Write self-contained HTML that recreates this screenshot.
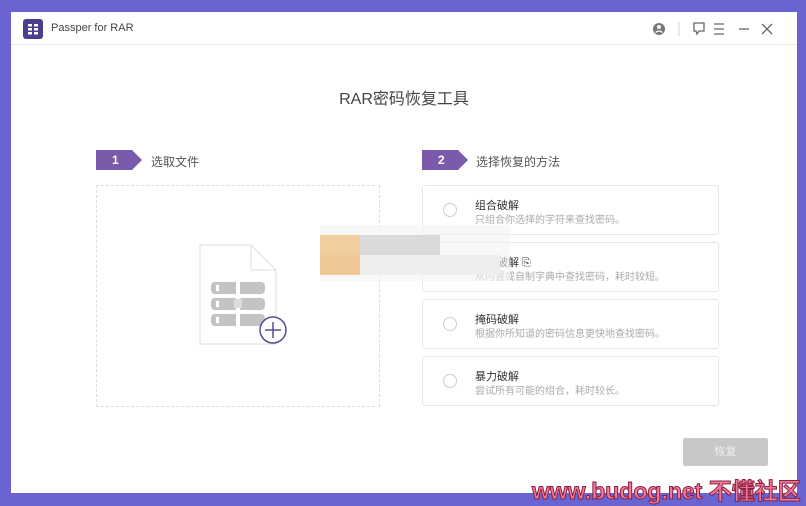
<!DOCTYPE html>
<html><head><meta charset="utf-8"><style>
*{margin:0;padding:0;box-sizing:border-box}
body{width:806px;height:504px;background:#6a64d2;position:relative;overflow:hidden;font-family:"Liberation Sans","Noto Sans CJK SC",sans-serif}
.win{position:absolute;left:11px;top:12px;width:786px;height:481px;background:#fff}
.hdr{position:absolute;left:0;top:0;width:786px;height:33px;border-bottom:1px solid #ececec}
.logo{position:absolute;left:12px;top:7px;width:20px;height:20px;background:#4d3d8f;border-radius:3px}
.t{position:absolute;font-size:12px;color:#555}
.step{position:absolute;height:20px;width:46px;background:#7a5bab;color:#fff;font-size:12px;font-weight:bold;line-height:20px;padding-left:16px;clip-path:polygon(0 0,36px 0,46px 50%,36px 100%,0 100%)}
.drop{position:absolute;left:85px;top:173px;width:284px;height:222px;border:1px dashed #ddd}
.opt{position:absolute;left:411px;width:297px;height:50px;border:1px solid #e6e6e6;border-radius:3px}
.rad{position:absolute;left:20px;top:17px;width:14px;height:14px;border:1px solid #ccc;border-radius:50%}
.o1{position:absolute;left:52px;top:11px;font-size:11px;color:#333}
.o2{position:absolute;left:52px;top:25px;font-size:10px;color:#aaa}
.btn{position:absolute;left:672px;top:426px;width:85px;height:28px;background:#c8c8c8;border-radius:2px;color:#eee;font-size:11px;text-align:center;line-height:28px}
</style></head><body>
<div class="win">
<div class="hdr">
<div class="logo"><svg width="20" height="20"><g fill="#fff"><rect x="5" y="5" width="10" height="2.5"/><rect x="5" y="9" width="10" height="2.5"/><rect x="5" y="13" width="10" height="2.5"/></g><rect x="9" y="4" width="2" height="12" fill="#4d3d8f"/></svg></div>
<div class="t" style="left:40px;top:10px;font-size:11px;color:#444">Passper for RAR</div>
<svg style="position:absolute;left:640px;top:8px" width="140" height="18" fill="none" stroke="#666" stroke-width="1.3">
<circle cx="8" cy="9" r="6" fill="#777" stroke="none"/><circle cx="8" cy="7" r="2" fill="#fff" stroke="none"/><path d="M4.5 12.5q3.5-3 7 0" stroke="#fff"/>
<line x1="28" y1="2" x2="28" y2="16" stroke="#ddd"/>
<path d="M43 3h10v8h-5l-2 3-1-3h-2z"/>
<path d="M63 4h10M63 9h10M63 14h10"/>
<path d="M88 9h10"/>
<path d="M111 4l10 10M121 4l-10 10"/>
</svg>
</div>
<div class="t" style="left:0;width:786px;text-align:center;top:73px;font-size:16px;color:#444">RAR密码恢复工具</div>
<div class="step" style="left:85px;top:138px">1</div>
<div class="t" style="left:140px;top:141px">选取文件</div>
<div class="step" style="left:411px;top:138px">2</div>
<div class="t" style="left:465px;top:141px">选择恢复的方法</div>
<div class="drop"></div>
<svg style="position:absolute;left:188px;top:232px" width="92" height="102">
<path d="M1 1h51l25 25v74H1z" fill="#fff" stroke="#ddd"/><path d="M52 1v25h25" fill="none" stroke="#ddd"/>
<g fill="#c4c4c4"><rect x="12" y="38" width="54" height="12" rx="4"/><rect x="12" y="54" width="54" height="12" rx="4"/><rect x="12" y="70" width="54" height="12" rx="4"/></g>
<g fill="#fff"><rect x="17" y="41" width="3" height="6"/><rect x="17" y="57" width="3" height="6"/><rect x="17" y="73" width="3" height="6"/><rect x="37" y="38" width="4" height="44"/></g>
<rect x="35" y="55" width="8" height="9" fill="#ddd"/>
<circle cx="74" cy="86" r="13" fill="#fff" stroke="#5b4a93" stroke-width="1.5"/><path d="M66 86h16M74 78v16" stroke="#5b4a93" stroke-width="1.5"/>
</svg>
<div class="opt" style="top:173px"><div class="rad"></div><div class="o1">组合破解</div><div class="o2">只组合你选择的字符来查找密码。</div></div>
<div class="opt" style="top:230px"><div class="rad"></div><div class="o1">字典破解 ⎘</div><div class="o2">从内置或自制字典中查找密码，耗时较短。</div></div>
<div class="opt" style="top:287px"><div class="rad"></div><div class="o1">掩码破解</div><div class="o2">根据你所知道的密码信息更快地查找密码。</div></div>
<div class="opt" style="top:344px"><div class="rad"></div><div class="o1">暴力破解</div><div class="o2">尝试所有可能的组合，耗时较长。</div></div>
<div class="btn">恢复</div>
</div>
<svg style="position:absolute;left:320px;top:225px" width="190" height="56">
<rect x="0" y="0" width="190" height="56" fill="#f4f4f4" opacity=".6"/>
<rect x="0" y="10" width="40" height="20" fill="#f1cda0"/><rect x="0" y="30" width="40" height="20" fill="#f0c896"/>
<rect x="40" y="10" width="80" height="20" fill="#dadada"/><rect x="40" y="30" width="140" height="20" fill="#eeeeee"/>
</svg>
<div style="position:absolute;left:532px;top:472px;font:bold 23px 'Liberation Sans','Noto Sans CJK SC',sans-serif;color:#f07a9a;-webkit-text-stroke:1px #8a2040;letter-spacing:0px;white-space:nowrap">www.budog.net 不懂社区</div>
</body></html>
